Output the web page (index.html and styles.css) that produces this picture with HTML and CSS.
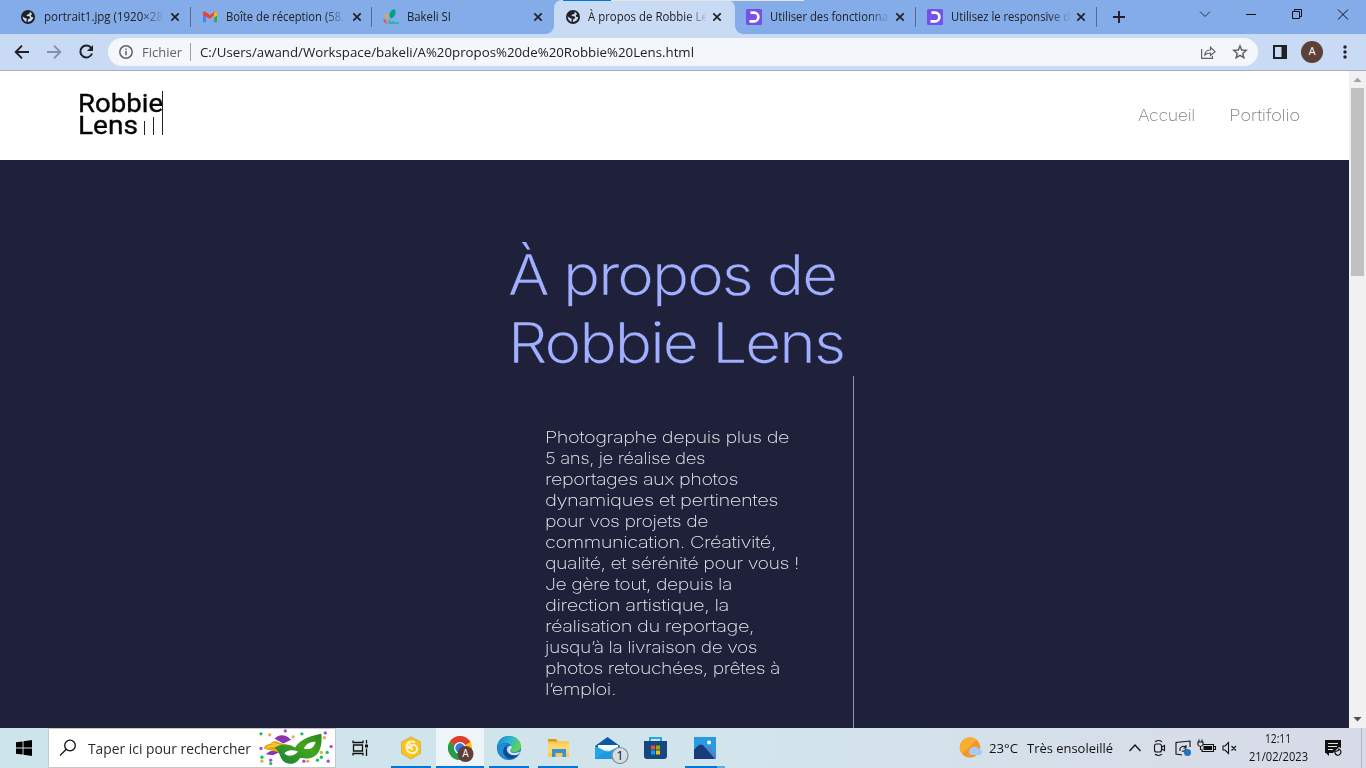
FILE: index.html
```html
<!DOCTYPE html>
<html lang="fr">
<head>
<meta charset="utf-8">
<title>À propos de Robbie Lens</title>
<link rel="stylesheet" href="styles.css">
</head>
<body>
<svg width="0" height="0" class="defs">
  <defs>
    <symbol id="globe" viewBox="0 0 14 14"><circle cx="7" cy="7" r="7" fill="#202124"/><path d="M8.2 1.7 9.1 3 7.5 4.2 6.2 4.5 5.4 6 8 6.3 9.3 7.3 8.8 8.6 7.3 9 6.7 11.9C9.7 11.9 12 9.8 12.2 7l-1.7-.1-.8-1.4 1.4-1.4C10.4 2.8 9.4 2 8.2 1.700zM1.700 6.600 4.300 8.200 6 8.800 5.500 10.200 5.400 11.900C3.200 11.200 1.600 9.200 1.700 6.600z" fill="#c9daf4"/></symbol>
    <symbol id="close" viewBox="0 0 10 10"><path d="M1.300 1.300 8.700 8.700M8.700 1.300 1.300 8.700" stroke="#202124" stroke-width="1.700"/></symbol>
    <symbol id="dclic" viewBox="0 0 16 16"><rect width="16" height="16" rx="1.500" fill="#7451eb"/><path d="M4.500 3.600H8a4.400 4.400 0 0 1 0 8.800H3.500" fill="none" stroke="#fff" stroke-width="2.600"/></symbol>
  </defs>
</svg>
<div class="screen">
  <div class="tabstrip">
    <div class="behind"></div>
    <div class="tab first"><svg class="fav"><use href="#globe" x="1" y="1" width="14" height="14"/></svg><div class="label"><span class="fit" data-w="119">portrait1.jpg (1920×28</span></div><svg class="x"><use href="#close"/></svg></div>
    <div class="tab"><svg class="fav" viewBox="0 0 16 16"><path d="M1 4v9.200h3V6z" fill="#4285f4"/><path d="M12 6v7.200h3V4z" fill="#34a853"/><path d="M12 3.500 15 3v3.500l-3 2z" fill="#fbbc04"/><path d="M1 6.500V3.800C1 2.500 2.500 2 3.500 2.800L8 6.100l4.500-3.300c1-.8 2.500-.3 2.500 1L8 9.800z" fill="#ea4335"/><path d="m12 4 1-1c1-.6 2 0 2 1v2l-3 2.300z" fill="#fbbc04"/></svg><div class="label"><span class="fit" data-w="118">Boîte de réception (58.</span></div><svg class="x"><use href="#close"/></svg></div>
    <div class="tab nosep"><svg class="fav" viewBox="0 0 16 16"><path d="M11.500 0C14 3.500 12 9 7.500 9.500 5 6 7 .8 11.500 0z" fill="#05a08b"/><path d="M4 4c2 1.500 2 5-.2 6.200C1.800 8 2.500 5 4 4z" fill="#f5a623"/><path d="M.5 9.500C3 10 4.200 12.500 3.800 15 1.500 14.500.2 12 .5 9.500z" fill="#ef5350"/><path d="M6 14h10M6.500 11v4M10 12v3" stroke="#35b2ad" stroke-width="2"/></svg><div class="label"><span class="fit" data-w="44">Bakeli SI</span></div><svg class="x"><use href="#close"/></svg></div>
    <div class="tab active"><svg class="fav"><use href="#globe" x="1" y="1" width="14" height="14"/></svg><div class="label"><span class="fit" data-w="120">À propos de Robbie Le</span></div><svg class="x"><use href="#close"/></svg></div>
    <div class="tab late"><svg class="fav"><use href="#dclic"/></svg><div class="label"><span class="fit" data-w="118">Utiliser des fonctionna</span></div><svg class="x"><use href="#close"/></svg></div>
    <div class="tab late"><svg class="fav"><use href="#dclic"/></svg><div class="label"><span class="fit" data-w="119">Utilisez le responsive d</span></div><svg class="x"><use href="#close"/></svg></div>
    <svg class="plus" viewBox="0 0 12 12"><path d="M6 0v12M0 6h12" stroke="#202124" stroke-width="1.900"/></svg>
    <svg class="winctl" viewBox="0 0 152 16" fill="none" stroke="#111"><path d="m4 3.500 5 5 5-5" stroke="#27324a"/><path d="M50 6.500h10" stroke-width="1"/><path d="M96.500 3.500h7v7h-7zM98.500 3.500v-2h7v7h-2"/><path d="m142 1.500 10 10M152 1.500l-10 10"/></svg>
  </div>
  <div class="toolbar">
    <svg class="navi" viewBox="0 0 100 20" fill="none" stroke-width="1.900"><path d="M29 10H16m6-6.300L15.700 10l6.300 6.300" stroke="#202124"/><path d="M47 10h13m-6-6.300 6.300 6.300-6.300 6.300" stroke="#8391aa"/><path d="M91.200 6A6 6 0 1 0 92 11.500" stroke="#202124" stroke-width="2"/><path d="M93 3v6h-6z" fill="#202124"/></svg>
    <div class="omnibox">
      <svg class="info" viewBox="0 0 14 14"><circle cx="7" cy="7" r="6.200" fill="none" stroke="#5f6368" stroke-width="1.500"/><path d="M7 6v4.300M7 3.600v1.500" stroke="#5f6368" stroke-width="1.500"/></svg>
      <span class="scheme"><span class="fit" data-w="40">Fichier</span></span>
      <span class="url"><span class="fit" data-w="494">C:/Users/awand/Workspace/bakeli/A%20propos%20de%20Robbie%20Lens.html</span></span>
      <svg class="share" viewBox="0 0 50 16" fill="none" stroke="#5f6368" stroke-width="1.200"><path d="M1.600 5v9.400H12.500V12M4.800 11c.2-3.500 2.300-5 5.700-5V3.200L15 7.600 10.500 11.500V9C8 9 6.300 9.500 4.800 11z"/><path d="m40 2 1.700 4 4.500.4-3.400 3 1 4.300L40 11.400l-3.800 2.300 1-4.300-3.400-3 4.500-.4z" stroke-width="1.500"/></svg>
    </div>
    <svg class="side" viewBox="0 0 14 14"><path d="M1 1h12v12H1z" fill="none" stroke="#202124" stroke-width="2"/><path d="M8.500 0H14v14H8.500z" fill="#202124"/></svg>
    <div class="avatar">A</div>
    <svg class="dots" viewBox="0 0 4 14" fill="#202124"><circle cx="2" cy="2" r="1.700"/><circle cx="2" cy="7" r="1.700"/><circle cx="2" cy="12" r="1.700"/></svg>
  </div>
  <div class="viewport">
    <main class="page">
      <header class="header">
        <div class="logo"><div class="brand"><span class="fit" data-w="85">Robbie</span></div><div class="brand"><span class="fit" data-w="60">Lens</span></div><svg class="bars" viewBox="0 0 20 44"><path d="M.5 30v14M9.500 26v18M18.500 0v44" stroke="#222"/></svg></div>
        <nav class="links"><a><span class="fit" data-w="57">Accueil</span></a><a><span class="fit" data-w="71">Portifolio</span></a></nav>
      </header>
      <section class="about">
        <h1 class="title"><span class="fit" data-w="328">À propos de</span><br><span class="fit" data-w="336">Robbie Lens</span></h1>
        <div class="bio">
          <p class="text"><span class="fit" data-w="244">Photographe depuis plus de</span><br><span class="fit" data-w="160">5 ans, je réalise des</span><br><span class="fit" data-w="193">reportages aux photos</span><br><span class="fit" data-w="233">dynamiques et pertinentes</span><br><span class="fit" data-w="163">pour vos projets de</span><br><span class="fit" data-w="231">communication. Créativité,</span><br><span class="fit" data-w="254">qualité, et sérénité pour vous !</span><br><span class="fit" data-w="187">Je gère tout, depuis la</span><br><span class="fit" data-w="184">direction artistique, la</span><br><span class="fit" data-w="209">réalisation du reportage,</span><br><span class="fit" data-w="212">jusqu’à la livraison de vos</span><br><span class="fit" data-w="235">photos retouchées, prêtes à</span><br><span class="fit" data-w="71">l’emploi.</span></p>
        </div>
      </section>
    </main>
    <div class="scroll"><svg viewBox="0 0 17 17"><path d="m4.500 11 4-4.500 4 4.500z" fill="#a3a3a3"/></svg><div class="thumb"></div><svg class="down" viewBox="0 0 17 17"><path d="m4.500 6 4 4.500 4-4.500z" fill="#505050"/></svg></div>
  </div>
  <footer class="taskbar">
    <div class="start"><svg viewBox="0 0 16 16"><path d="M0 2.300 6.600 1.400v6.100H0zM7.500 1.200 16 0v7.500H7.500zM0 8.500h6.600v6.100L0 13.700zM7.500 8.500H16V16l-8.500-1.200z"/></svg></div>
    <div class="search">
      <svg class="lens" viewBox="0 0 18 18" fill="none" stroke="#111" stroke-width="1.300"><circle cx="11" cy="6.500" r="5.300"/><path d="M7.300 10.300 1 16.500"/></svg>
      <span class="fit" data-w="163">Taper ici pour rechercher</span>
      <svg class="mask" viewBox="0 0 78 39">
        <defs><linearGradient id="gm" x1="0" y1="1" x2="1" y2="0"><stop offset="0" stop-color="#15803a"/><stop offset=".6" stop-color="#46a51c"/><stop offset="1" stop-color="#278523"/></linearGradient></defs>
        <path d="M16 10C20 5 27 5 33 11L25 15zM7 26c5-5 10-4 16-3l-9 4z" fill="#8b35b5"/><path d="M5 20c1-4 5-4 7-5 2-3 6-3 9-1l10 3-8 9c-5-4-10-3-18-6z" fill="#e6a512"/><path d="M8 19c7-3 13-1 18 3M13 15c6 0 10 2 15 5" stroke="#ffd03b" fill="none" stroke-width="1.500"/>
        <path d="M16 19c7-4 15-4 21 0C43 10 54 7 64 5c1 11-1 23-12 25-4 1-7-1-10 0-3 5-9 7-14 5-7-3-5-10-12-16z" fill="url(#gm)"/><path d="M26 25c3-4 9-4 14-2-4 5-11 6-14 2zM46 20c2-5 7-7 12-7-1 6-6 9-12 7z" fill="#fff"/>
        <g fill="#a050d0"><circle cx="27" cy="2" r="1.700"/><circle cx="68" cy="4" r="1.700"/><circle cx="74" cy="18" r="1.700"/><circle cx="2" cy="20" r="1.700"/><circle cx="12" cy="32" r="1.700"/><circle cx="46" cy="33" r="1.700"/><circle cx="71" cy="33" r="1.700"/></g><g fill="#22bd58"><circle cx="2" cy="5" r="1.700"/><circle cx="44" cy="5" r="1.700"/><circle cx="3" cy="29" r="1.700"/><circle cx="12" cy="35.500" r="1.700"/><circle cx="60" cy="32" r="1.700"/><circle cx="64" cy="29" r="1.700"/><circle cx="70" cy="24" r="1.700"/></g><g fill="#dbb54a"><circle cx="11" cy="6" r="1.700"/><circle cx="35" cy="8" r="1.700"/><circle cx="67" cy="9" r="1.700"/><circle cx="64" cy="24" r="1.700"/><circle cx="3" cy="33" r="1.700"/><circle cx="50" cy="33" r="1.700"/></g>
      </svg>
    </div>
    <div class="taskview"><svg viewBox="0 0 18 18" fill="none" stroke="#111" stroke-width="1.300"><path d="M2 1.500v2h10v-2M2 16.500v-2h10v2M2.500 6h9v6h-9zM15.500 1v3.500M15.500 9.500V17"/><path d="M14 5.500h3v3h-3z" fill="#111" stroke="none"/></svg></div>
    <div class="apps">
      <div class="app open"><svg viewBox="0 0 24 24"><path d="M12 .8 21.500 6v11.500L12 23l-9.500-5.500V6z" fill="#fbc31c" stroke="#c9a548" stroke-width=".7"/><path d="M16 6.500C11 4 7 7 7.500 12c.5 5 7 7 10 3 2-3-.5-6-3-6-3.500 0-3.500 4-.5 4.500" fill="none" stroke="#fff4cf" stroke-width="2"/><path d="m9 7 3 2M7 12l4-1M7.500 8l3 5" stroke="#fff4cf" stroke-width="2"/></svg></div>
      <div class="app current"><svg viewBox="0 0 26 26"><circle cx="12" cy="12" r="12" fill="#fbc116"/><path d="M12 12 1.600 6A12 12 0 0 1 22.400 6z" fill="#e33b2e"/><path d="M12 12 1.600 6A12 12 0 0 0 12 24l5-9z" fill="#269b4b"/><circle cx="12" cy="12" r="6" fill="#fff"/><circle cx="12" cy="12" r="4.700" fill="#3478e5"/><circle cx="17.500" cy="18" r="8" fill="#5d4037"/><text x="17.500" y="21.300" text-anchor="middle" class="badge">A</text></svg></div>
      <div class="app open"><svg viewBox="0 0 24 24"><defs><linearGradient id="ed" x1="0" y1="0" x2="1" y2=".4"><stop offset="0" stop-color="#1582d2"/><stop offset=".55" stop-color="#29b8d0"/><stop offset="1" stop-color="#62d254"/></linearGradient></defs><circle cx="12" cy="12" r="12" fill="#1573c6"/><path d="M0 11C1 3 6 0 12 0c7 0 12 5 12 10 0 4-3 6-7 6-3 0-4-1-3-2 2-3 0-7-5-7-4 0-7 2-9 4z" fill="url(#ed)"/><path d="M9 9c-5 5-1 14 6 14.500C9 25 1 20 1 13c0-4 5-6 10-5z" fill="#1f8ddc"/><path d="M10 10c-3 7 4 11 12 7-3 6-10 7-13 4-4-3-4-9 1-11z" fill="#114a8b"/><path d="M13.500 14c-1 3 5 4 9.800 1.200L22 18c-6 3-12 0-12-5 0-2 3-4 4-3 2 1 .5 3-.5 4z" fill="#d4e6ed"/></svg></div>
      <div class="app open"><svg viewBox="0 0 24 24"><path d="M2 3h8l2 2h11v16H2z" fill="#f9cb52"/><path d="M2 3h8l1.500 2.500H2z" fill="#d69a14"/><path d="M2 8h21v9H2z" fill="#ffd76b"/><path d="M6 13h14v8h-3.500v-4h-7v4H6z" fill="#3992d8"/></svg></div>
      <div class="app"><svg class="mail" viewBox="0 0 34 28"><path d="M0 10 12.500 1 25 10v13H0z" fill="#0d58a5"/><path d="M3 9h20v9H3z" fill="#f4f7fb"/><path d="m0 10 12.500 6L25 10v13H0z" fill="#26a6e8"/><path d="m0 23 12-9 13 9z" fill="#1590dc" opacity=".55"/><circle cx="25" cy="19.500" r="8" fill="#d5dfe3" stroke="#858b8e" stroke-width="1.200"/><text x="25" y="24" text-anchor="middle" class="count">1</text></svg></div>
      <div class="app"><svg class="store" viewBox="0 0 24 24"><path d="M7 6V2h11v4" fill="none" stroke="#22a6df" stroke-width="2"/><path d="M1 5h23v15q0 3-3 3H4q-3 0-3-3z" fill="#17477f"/><path d="M8 9.500h4v4H8z" fill="#f25022"/><path d="M13 9.500h4v4h-4z" fill="#7fba00"/><path d="M8 14.500h4v4H8z" fill="#00a4ef"/><path d="M13 14.500h4v4h-4z" fill="#ffb900"/></svg></div>
      <div class="app open photos"><svg viewBox="0 0 24 24"><path d="M1 1h22v22H1z" fill="#299be3"/><path d="m13 13 3-2 7 7v5H12z" fill="#5280cf"/><path d="M1 13.500 6 9q2-1 4 0l12 14H1z" fill="#173c79"/><circle cx="16" cy="6.500" r="2" fill="#fff"/></svg></div>
    </div>
    <div class="tray">
      <svg class="weather" viewBox="0 0 24 22"><circle cx="11" cy="10.500" r="10.300" fill="#f3972b"/><path d="M3 17A10.300 10.300 0 0 1 18 3L3 17z" fill="#f8ae30"/><path d="M12 18a4 4 0 0 1 0-7 5 5 0 0 1 8 1c4 0 4 6 0 6z" fill="#a8c9f3"/></svg>
      <span class="temp"><span class="fit" data-w="29">23°C</span></span><span class="sky"><span class="fit" data-w="86">Très ensoleillé</span></span>
      <svg class="icons" viewBox="0 0 112 20" fill="none" stroke="#111" stroke-width="1.100"><path d="m.5 13 5.500-6 5.500 6" stroke-width="1.300"/><rect x="25.500" y="6" width="7" height="8" rx="2"/><path d="m33 9 2.500-1.500v5L33 11M26 3.800q4-2.500 7 0M26 16.200q4 2.500 7 0"/><path d="M61 9V3l-14 1.500V16l6 1M47 4v11"/><path d="M51 13V10.500q3-4 6-1M57 7v3h-2.500M57 11q-2 3-4 2"/><circle cx="58.500" cy="14.500" r="3.500" fill="#2472bf" stroke="none"/><path d="M74.500 6.500h11v7H74v-2.500M86 8.500h1.500v3H86M70 4h5v3q-2.500 3-5 0zM71 1.500V4M74 1.500V4M72.500 8v4" transform="translate(-1 0)"/><path d="M75 8.500h7.500v3H75z" fill="#111"/><path d="M95 8h2l3.500-3.500v11L97 12h-2zM103.500 8l4.500 4.500M108 8l-4.500 4.500" transform="translate(-1 0)"/></svg>
      <div class="clock"><span class="fit" data-w="26">12:11</span><span class="fit" data-w="59">21/02/2023</span></div>
      <svg class="note" viewBox="0 0 17 17"><path d="M0 0h16v8l-2-1-6 6H4v3l-3-3H0z" fill="#111"/><path d="M3 3.500h10M3 6.500h9M3 9.500h5" stroke="#d6e1ea" stroke-width="1.200"/><path d="M10 11q3 1 4-2 4 3 0 6-3 1-4-2z" fill="none" stroke="#111" stroke-width="1.200"/></svg>
    </div>
  </footer>
</div>
<script src="fit.js"></script>
</body>
</html>
```
FILE: styles.css
```css
* { box-sizing: border-box; }
body { margin: 0; overflow: hidden; font-family: "Open Sans", "Noto Sans", sans-serif; }
svg { display: block; flex: none; }
.defs { position: absolute; }
.screen { width: 1366px; height: 768px; display: flex; flex-direction: column; overflow: hidden; }
.fit { display: inline-block; white-space: pre; transform-origin: 0 50%; }

.tabstrip { position: relative; height: 34px; background: #84ace8; display: flex; align-items: center; padding-left: 10px; flex: none; }
.behind { position: absolute; left: 563px; top: 0; width: 241px; height: 1px; background: linear-gradient(90deg, #0078d7 48px, #e4e5e2 48px); z-index: 2; }
.tab { position: relative; width: 181.2px; height: 34px; display: flex; align-items: center; padding-left: 11px; font-size: 12px; color: #202124; flex: none; }
.tab.first { padding-left: 10px; }
.tab:not(.active):not(.nosep)::after { content: ""; position: absolute; right: 0; top: 7px; width: 1px; height: 20px; background: #526b91; }
.fav { width: 16px; height: 16px; margin-right: 8px; }
.label { width: 120px; overflow: hidden; white-space: nowrap; line-height: 18px; -webkit-mask-image: linear-gradient(90deg, #000 98px, transparent 120px); mask-image: linear-gradient(90deg, #000 98px, transparent 120px); }
.x { width: 10px; height: 10px; margin-left: 6px; }
.tab.active { background: #c9daf4; border-radius: 8px 8px 0 0; padding-left: 11.4px; }
.active .label { width: 118px; }
.active .fav { margin-right: 7.5px; }
.late .label { width: 119px; }
.active::before, .active::after { content: ""; position: absolute; bottom: 0; width: 8px; height: 8px; }
.active::before { left: -8px; background: radial-gradient(circle at 0 0, #84ace8 7.5px, #c9daf4 8px); }
.active::after { right: -8px; background: radial-gradient(circle at 100% 0, #84ace8 7.5px, #c9daf4 8px); }
.plus { width: 12px; height: 12px; margin-left: 16px; }
.winctl { width: 152px; height: 16px; margin-left: 71px; margin-bottom: 3px; overflow: visible; }

.toolbar { height: 37px; background: #c9daf4; border-bottom: 1px solid #a5adc9; display: flex; align-items: center; flex: none; }
.navi { width: 100px; height: 20px; }
.omnibox { margin-left: 8px; width: 1150px; height: 28px; border-radius: 14px; background: #f3f7fc; display: flex; align-items: center; padding-left: 11px; font-size: 13px; line-height: 20px; color: #202124; }
.info { width: 14px; height: 14px; margin-right: 9px; }
.scheme { width: 49px; height: 18px; line-height: 18px; border-right: 1px solid #9ba0a6; color: #5f6368; }
.url { margin-left: 9px; flex: 1; }
.share { width: 50px; height: 16px; margin-right: 8px; }
.side { width: 14px; height: 14px; margin-left: 15px; }
.avatar { width: 22px; height: 22px; margin-left: 14px; border-radius: 50%; background: #5d4037; color: #fff; font: 11px/22px Roboto, sans-serif; text-align: center; }
.dots { width: 4px; height: 14px; margin-left: 20px; }

.viewport { height: 657px; display: flex; flex: none; }
.page { width: 1349px; display: flex; flex-direction: column; }
.header { height: 89px; background: #fff; display: flex; justify-content: space-between; padding: 20px 49px 0 78px; flex: none; }
.logo { position: relative; width: 85px; height: 44px; font: 400 26.5px/22px Roboto, sans-serif; color: #050505; -webkit-text-stroke: .35px #050505; }
.brand { height: 22px; padding-top: 1px; }
.bars { position: absolute; left: 66px; top: 0; width: 20px; height: 44px; -webkit-text-stroke: 0; }
.links { display: flex; gap: 34px; font: 200 16px/20px Inter, sans-serif; letter-spacing: -.3px; color: #858585; padding-top: 14px; }
.about { flex: 1; background: #1f2039; overflow: hidden; }
.title { margin: 81px 0 0 508px; width: 360px; font: 300 56.500px/68px Inter, sans-serif; letter-spacing: -1.800px; color: #a0afff; height: 135px; -webkit-text-stroke: .3px #1f2039; }
.bio { width: 345px; height: 352px; margin-left: 509px; border-right: 1px solid #9090b0; padding: 51px 0 0 36px; }
.text { margin: 0; font: 200 16.500px/21px Inter, sans-serif; letter-spacing: -.4px; color: #e8e8ee; white-space: nowrap; }
.text .fit, .title .fit { vertical-align: top; }
.scroll { width: 17px; background: #f1f1f1; display: flex; flex-direction: column; align-items: center; }
.scroll svg { width: 17px; height: 17px; }
.thumb { width: 13px; height: 188px; background: #c1c1c1; }
.down { margin-top: auto; }

.taskbar { height: 40px; background: linear-gradient(90deg, #cde4eb, #d2e4ec 55%, #d6dfe9 80%, #d7dae7); display: flex; align-items: stretch; flex: none; }
.start { width: 48px; padding: 12px 0 0 16px; }
.start svg { width: 16px; height: 16px; }
.search { width: 288px; background: #fff; border: 1px solid #c5c9cb; display: flex; align-items: center; font-size: 15px; color: #2a2a2a; }
.lens { width: 18px; height: 18px; margin: 0 11px 0 10px; }
.mask { width: 78px; height: 38px; margin-left: 7px; }
.taskview { width: 51px; padding: 11px 0 0 15px; }
.taskview svg { width: 18px; height: 18px; }
.apps { display: flex; gap: 1px; }
.app { width: 48px; display: flex; justify-content: center; padding-top: 8px; border-bottom: 2px solid transparent; }
.app svg { width: 24px; height: 24px; }
.app:nth-child(2) svg { width: 26px; height: 26px; margin-left: 2px; }
.open { background: linear-gradient(#0078d7, #0078d7) 4px 100% / 40px 2px no-repeat border-box; }
.current { background: #edf5f8; border-bottom-color: #0078d7; }
.photos { background-image: linear-gradient(90deg, #0078d7 32px, #66a9df 32px); }
.app .mail { width: 34px; height: 28px; margin-left: 9px; }
.app .store { margin-right: 2px; }
.badge { font: 10px Roboto, sans-serif; fill: #fff; }
.count { font: 13px "Open Sans", sans-serif; fill: #111; }
.tray { display: flex; align-items: center; margin: 0 4px 0 auto; width: 403px; border-right: 1px solid #aeb6bf; font-size: 13.500px; color: #111; }
.weather { width: 24px; height: 22px; }
.temp { margin-left: 6px; width: 38px; }
.sky { width: 102px; }
.icons { width: 112px; height: 20px; }
.clock { width: 74px; display: flex; flex-direction: column; align-items: center; gap: 2px; font-size: 12px; line-height: 16px; }
.note { width: 17px; height: 17px; margin-left: 10px; }
```
FILE: fit.js
```js
// Stretch or condense each text run to its intended width.
document.querySelectorAll('.fit').forEach(function (el) {
  var target = Number(el.dataset.w);
  var natural = el.getBoundingClientRect().width;
  el.style.width = target + 'px';
  el.style.transform = 'scaleX(' + target / natural + ')';
});
```
